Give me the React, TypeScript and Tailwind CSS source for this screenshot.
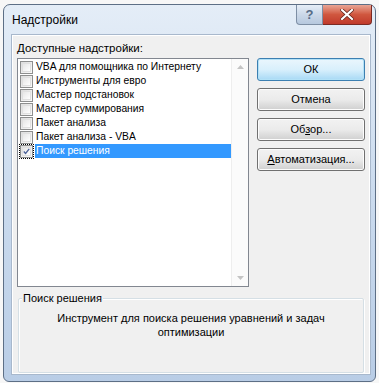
import React from "react";

const items = [
  "VBA для помощника по Интернету",
  "Инструменты для евро",
  "Мастер подстановок",
  "Мастер суммирования",
  "Пакет анализа",
  "Пакет анализа - VBA",
  "Поиск решения",
];

function Checkbox({ checked }: { checked?: boolean }) {
  return (
    <div className="w-[13px] h-[13px] border border-[#8e8f8f] bg-gradient-to-br from-[#dcdcdc] to-[#fbfbfb] flex items-center justify-center shrink-0">
      <div className="w-[9px] h-[9px] border border-[#e0e0e0] bg-gradient-to-br from-[#e6e6e6] to-white flex items-center justify-center">
        {checked && (
          <svg width="9" height="9" viewBox="0 0 9 9">
            <path d="M1 4.5 L3.3 7 L8 1" stroke="#4a5f97" strokeWidth="1.6" fill="none" />
          </svg>
        )}
      </div>
    </div>
  );
}

function Btn({ children, def }: { children: React.ReactNode; def?: boolean }) {
  return (
    <div
      className={
        "w-[108px] h-[23px] rounded-[3px] border flex items-center justify-center text-black text-[11px] " +
        (def
          ? "border-[#3c7fb1] bg-gradient-to-b from-[#eaf6fd] via-[#d9f0fc] to-[#a7d9f5] shadow-[inset_0_0_0_1px_#b2e1f7]"
          : "border-[#707070] bg-gradient-to-b from-[#f2f2f2] via-[#ebebeb] to-[#cfcfcf] shadow-[inset_0_0_0_1px_#fcfcfc]")
      }
    >
      {children}
    </div>
  );
}

export default function App() {
  return (
    <div
      className="w-[379px] h-[383px] bg-[#f7f7f7] overflow-hidden pt-[4px] pl-[3px] text-[11.5px]"
      style={{ fontFamily: '"Liberation Sans", Arial, sans-serif' }}
    >
      <div className="w-[373px] h-[378px] rounded-t-[7px] rounded-b-[6px] border border-[#5d6f86] bg-gradient-to-b from-[#e4edf7] via-[#cbdbee] to-[#b9cde6] flex flex-col">
        {/* title bar */}
        <div className="h-[29px] flex items-start relative">
          <div className="pl-[8px] pt-[8px] text-[12px] leading-[14px] text-black">Надстройки</div>
          <div className="ml-auto flex mr-[3px]">
            <div className="w-[27px] h-[20px] rounded-bl-[4px] border border-[#7d8ea4] border-t-0 bg-gradient-to-b from-[#e6eef7] via-[#cbd8e8] to-[#b6c8de] flex items-center justify-center text-[13px] font-bold text-[#566b86]">
              ?
            </div>
            <div className="w-[49px] h-[20px] rounded-br-[4px] border border-[#7a2a23] border-t-0 border-l-0 bg-gradient-to-b from-[#e8a595] via-[#d0573f] to-[#c0392b] flex items-center justify-center">
              <svg width="14" height="11" viewBox="0 0 14 11">
                <path d="M2 1 L12 10 M12 1 L2 10" stroke="#5a1e16" strokeWidth="3.6" strokeLinecap="square" />
                <path d="M2 1 L12 10 M12 1 L2 10" stroke="white" strokeWidth="2.2" strokeLinecap="square" />
              </svg>
            </div>
          </div>
        </div>
        {/* client */}
        <div className="ml-[7px] mr-[4px] h-[341px] border border-[#a8b8cc] bg-[#f0f0f0] shadow-[inset_0_0_0_1px_#ffffff] flex flex-col text-black">
          <div className="pl-[5px] pt-[6px] h-[23px] leading-[14px]">
            <span className="underline">Д</span>оступные надстройки:
          </div>
          <div className="flex pl-[5px]">
            <div className="w-[232px] h-[229px] border border-[#828790] bg-white flex">
              <div className="flex-1 pt-[1px] text-[10.3px]">
                {items.map((t, i) => {
                  const sel = i === items.length - 1;
                  return (
                    <div key={t} className="h-[14px] flex items-center pl-[2px]">
                      <div className={sel ? "outline outline-1 outline-dotted outline-black" : ""}>
                        <Checkbox checked={sel} />
                      </div>
                      <div
                        className={
                          "ml-[2px] h-[14px] leading-[14px] flex-1 pl-[1px] whitespace-nowrap " +
                          (sel ? "bg-[#3399ff] text-white" : "")
                        }
                      >
                        {t}
                      </div>
                    </div>
                  );
                })}
              </div>
              <div className="w-[17px] border-l border-[#eeeeee] bg-[#fbfbfb] flex flex-col justify-between items-center py-[6px]">
                <svg width="7" height="4" viewBox="0 0 7 4">
                  <path d="M0 4 L3.5 0 L7 4 Z" fill="#c4c4c4" />
                </svg>
                <svg width="7" height="4" viewBox="0 0 7 4">
                  <path d="M0 0 L3.5 4 L7 0 Z" fill="#c4c4c4" />
                </svg>
              </div>
            </div>
            <div className="ml-[8px] flex flex-col gap-[7px]">
              <Btn def>ОК</Btn>
              <Btn>Отмена</Btn>
              <Btn>
                <span>
                  Об<span className="underline">з</span>ор...
                </span>
              </Btn>
              <Btn>
                <span>
                  <span className="underline">А</span>втоматизация...
                </span>
              </Btn>
            </div>
          </div>
          <div className="mx-[6px] mt-[4px] relative pt-[7px]">
            <div className="absolute left-[4px] top-0 px-[1px] bg-[#f0f0f0] leading-[14px] text-[11px]">Поиск решения</div>
            <div className="h-[75px] border border-[#d5dfe5] shadow-[inset_1px_1px_0_#ffffff,1px_1px_0_#ffffff] rounded-[2px] flex justify-center pt-[12px] text-[11px]">
              <div className="text-center leading-[14px] w-[290px]">
                Инструмент для поиска решения уравнений и задач оптимизации
              </div>
            </div>
          </div>
        </div>
      </div>
    </div>
  );
}
